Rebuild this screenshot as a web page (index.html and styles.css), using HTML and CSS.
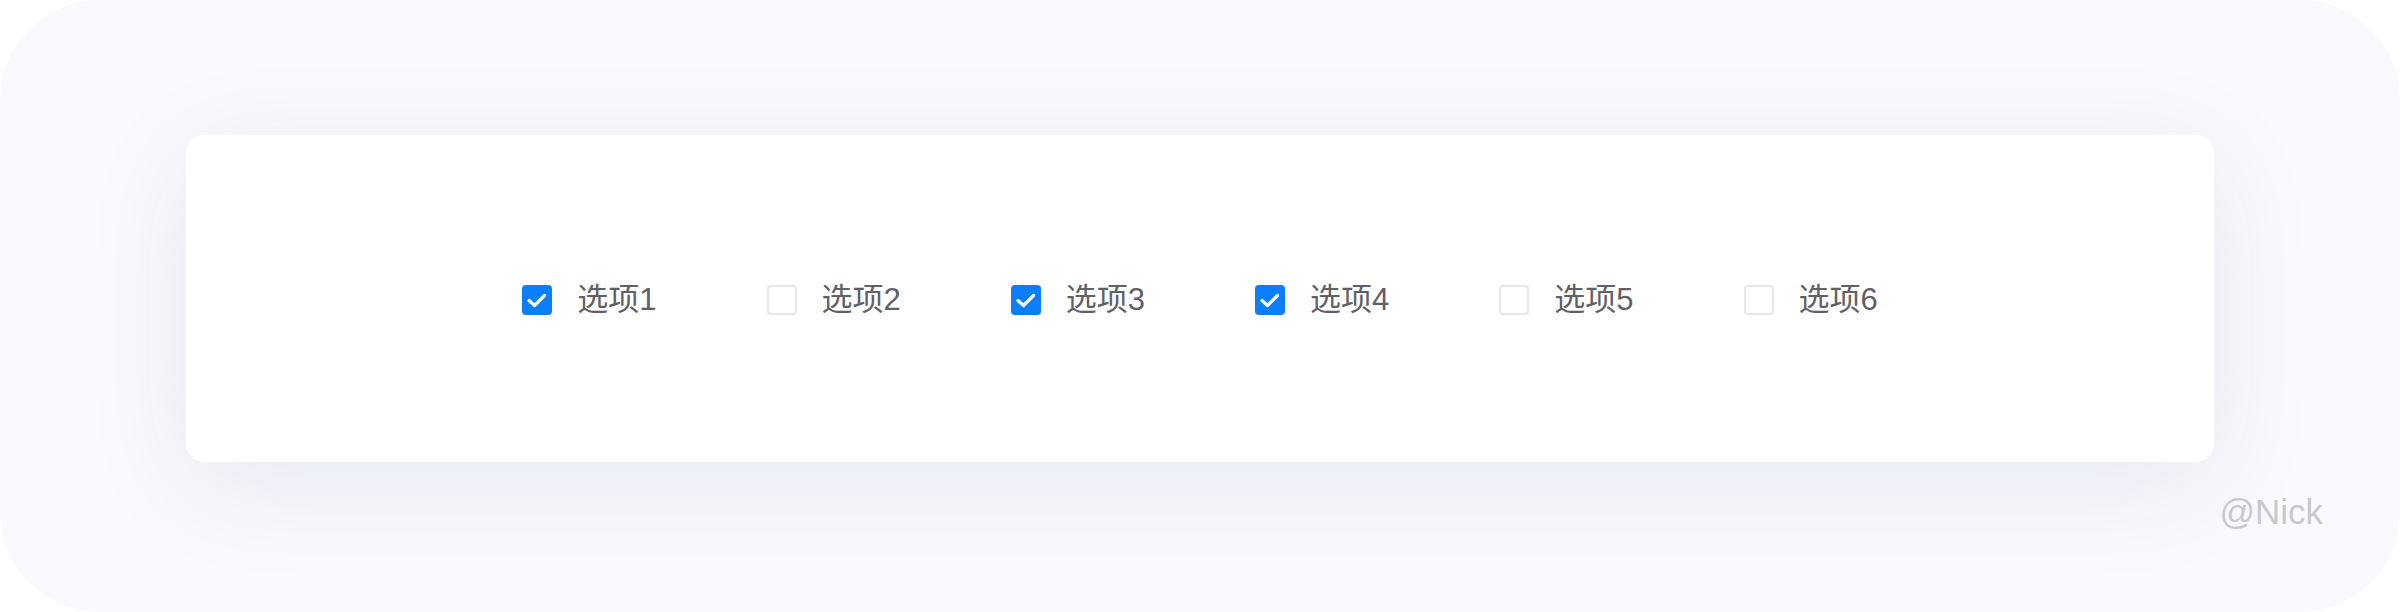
FILE: index.html
```html
<!DOCTYPE html>
<html lang="zh">
<head>
<meta charset="utf-8">
<link rel="stylesheet" href="styles.css">
</head>
<body>
<div class="frame">
  <div class="card">
    <div class="group">
      <label class="item"><span class="box checked"><svg viewBox="0 0 30 30"><path d="M7 15.5 L12.5 20.5 L22.5 10.5"/></svg></span><span class="label">选项1</span></label>
      <label class="item"><span class="box"></span><span class="label">选项2</span></label>
      <label class="item"><span class="box checked"><svg viewBox="0 0 30 30"><path d="M7 15.5 L12.5 20.5 L22.5 10.5"/></svg></span><span class="label">选项3</span></label>
      <label class="item"><span class="box checked"><svg viewBox="0 0 30 30"><path d="M7 15.5 L12.5 20.5 L22.5 10.5"/></svg></span><span class="label">选项4</span></label>
      <label class="item"><span class="box"></span><span class="label">选项5</span></label>
      <label class="item"><span class="box"></span><span class="label">选项6</span></label>
    </div>
  </div>
  <div class="sign">@Nick</div>
</div>
</body>
</html>
```
FILE: styles.css
```css
html, body {
  margin: 0;
  padding: 0;
  background: #ffffff;
}
.frame {
  width: 2400px;
  height: 612px;
  box-sizing: border-box;
  border-radius: 100px;
  background: #f9fafe;
  padding: 135px 0 0 186px;
  overflow: hidden;
}
.card {
  width: 2028px;
  height: 327px;
  background: #ffffff;
  border-radius: 18px;
  box-shadow: 0 22px 110px rgba(40, 50, 100, 0.085);
  display: flex;
  align-items: center;
  justify-content: center;
}
.group {
  display: flex;
  align-items: center;
  gap: 110px;
  padding-top: 2px;
}
.item {
  display: flex;
  align-items: center;
  gap: 25px;
}
.box {
  width: 30px;
  height: 30px;
  box-sizing: border-box;
  border: 2px solid #e7e7e9;
  border-radius: 4px;
  background: #ffffff;
  display: flex;
}
.box.checked {
  border: none;
  background: #0a7efd;
}
.box svg {
  width: 30px;
  height: 30px;
}
.box svg path {
  fill: none;
  stroke: #ffffff;
  stroke-width: 3.2;
  stroke-linecap: round;
  stroke-linejoin: round;
}
.label {
  font-family: "Liberation Sans", "Noto Sans CJK SC", sans-serif;
  font-size: 31px;
  line-height: 31px;
  color: #606067;
}
.sign {
  margin-top: 30px;
  padding-right: 77px;
  text-align: right;
  font-family: "Liberation Sans", "Noto Sans", sans-serif;
  font-size: 35px;
  line-height: 40px;
  color: #c8c9cd;
}
```
